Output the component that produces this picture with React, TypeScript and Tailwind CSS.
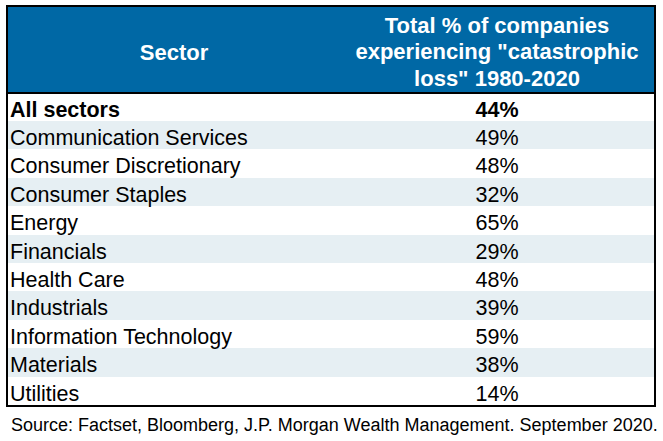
const rows: [string, string][] = [
  ['Communication Services', '49%'],
  ['Consumer Discretionary', '48%'],
  ['Consumer Staples', '32%'],
  ['Energy', '65%'],
  ['Financials', '29%'],
  ['Health Care', '48%'],
  ['Industrials', '39%'],
  ['Information Technology', '59%'],
  ['Materials', '38%'],
  ['Utilities', '14%'],
]

export default function App() {
  return (
    <div
      className="w-[663px] h-[441px] bg-white pt-[5px] pl-[6px]"
      style={{ fontFamily: '"Liberation Sans", Arial, sans-serif' }}
    >
      <div className="w-[650px] border-2 border-black">
        <div className="flex h-[87px] bg-[#0068a5] text-white font-bold text-[22px] border-b-2 border-black">
          <div className="w-[332px] flex items-center justify-center pt-[6px]">Sector</div>
          <div className="flex-1 flex items-center justify-center text-center leading-[26.5px] pt-[6px]">
            Total % of companies
            <br />
            experiencing "catastrophic
            <br />
            loss" 1980-2020
          </div>
        </div>
        <div className="flex h-[27px] items-center pt-[6px] text-[21.5px] font-bold text-black">
          <div className="w-[332px] pl-[2px]">All sectors</div>
          <div className="flex-1 text-center">44%</div>
        </div>
        {rows.map(([name, pct], i) => (
          <div
            key={name}
            className={
              'flex h-[28.4px] items-center pt-[6px] text-[21.5px] text-black ' +
              (i % 2 === 0 ? 'bg-[#e6eff3]' : 'bg-white')
            }
          >
            <div className="w-[332px] pl-[2px]">{name}</div>
            <div className="flex-1 text-center">{pct}</div>
          </div>
        ))}
      </div>
      <div className="text-[18px] text-black pl-[5px] pt-[5px]">
        Source: Factset, Bloomberg, J.P. Morgan Wealth Management. September 2020.
      </div>
    </div>
  )
}
